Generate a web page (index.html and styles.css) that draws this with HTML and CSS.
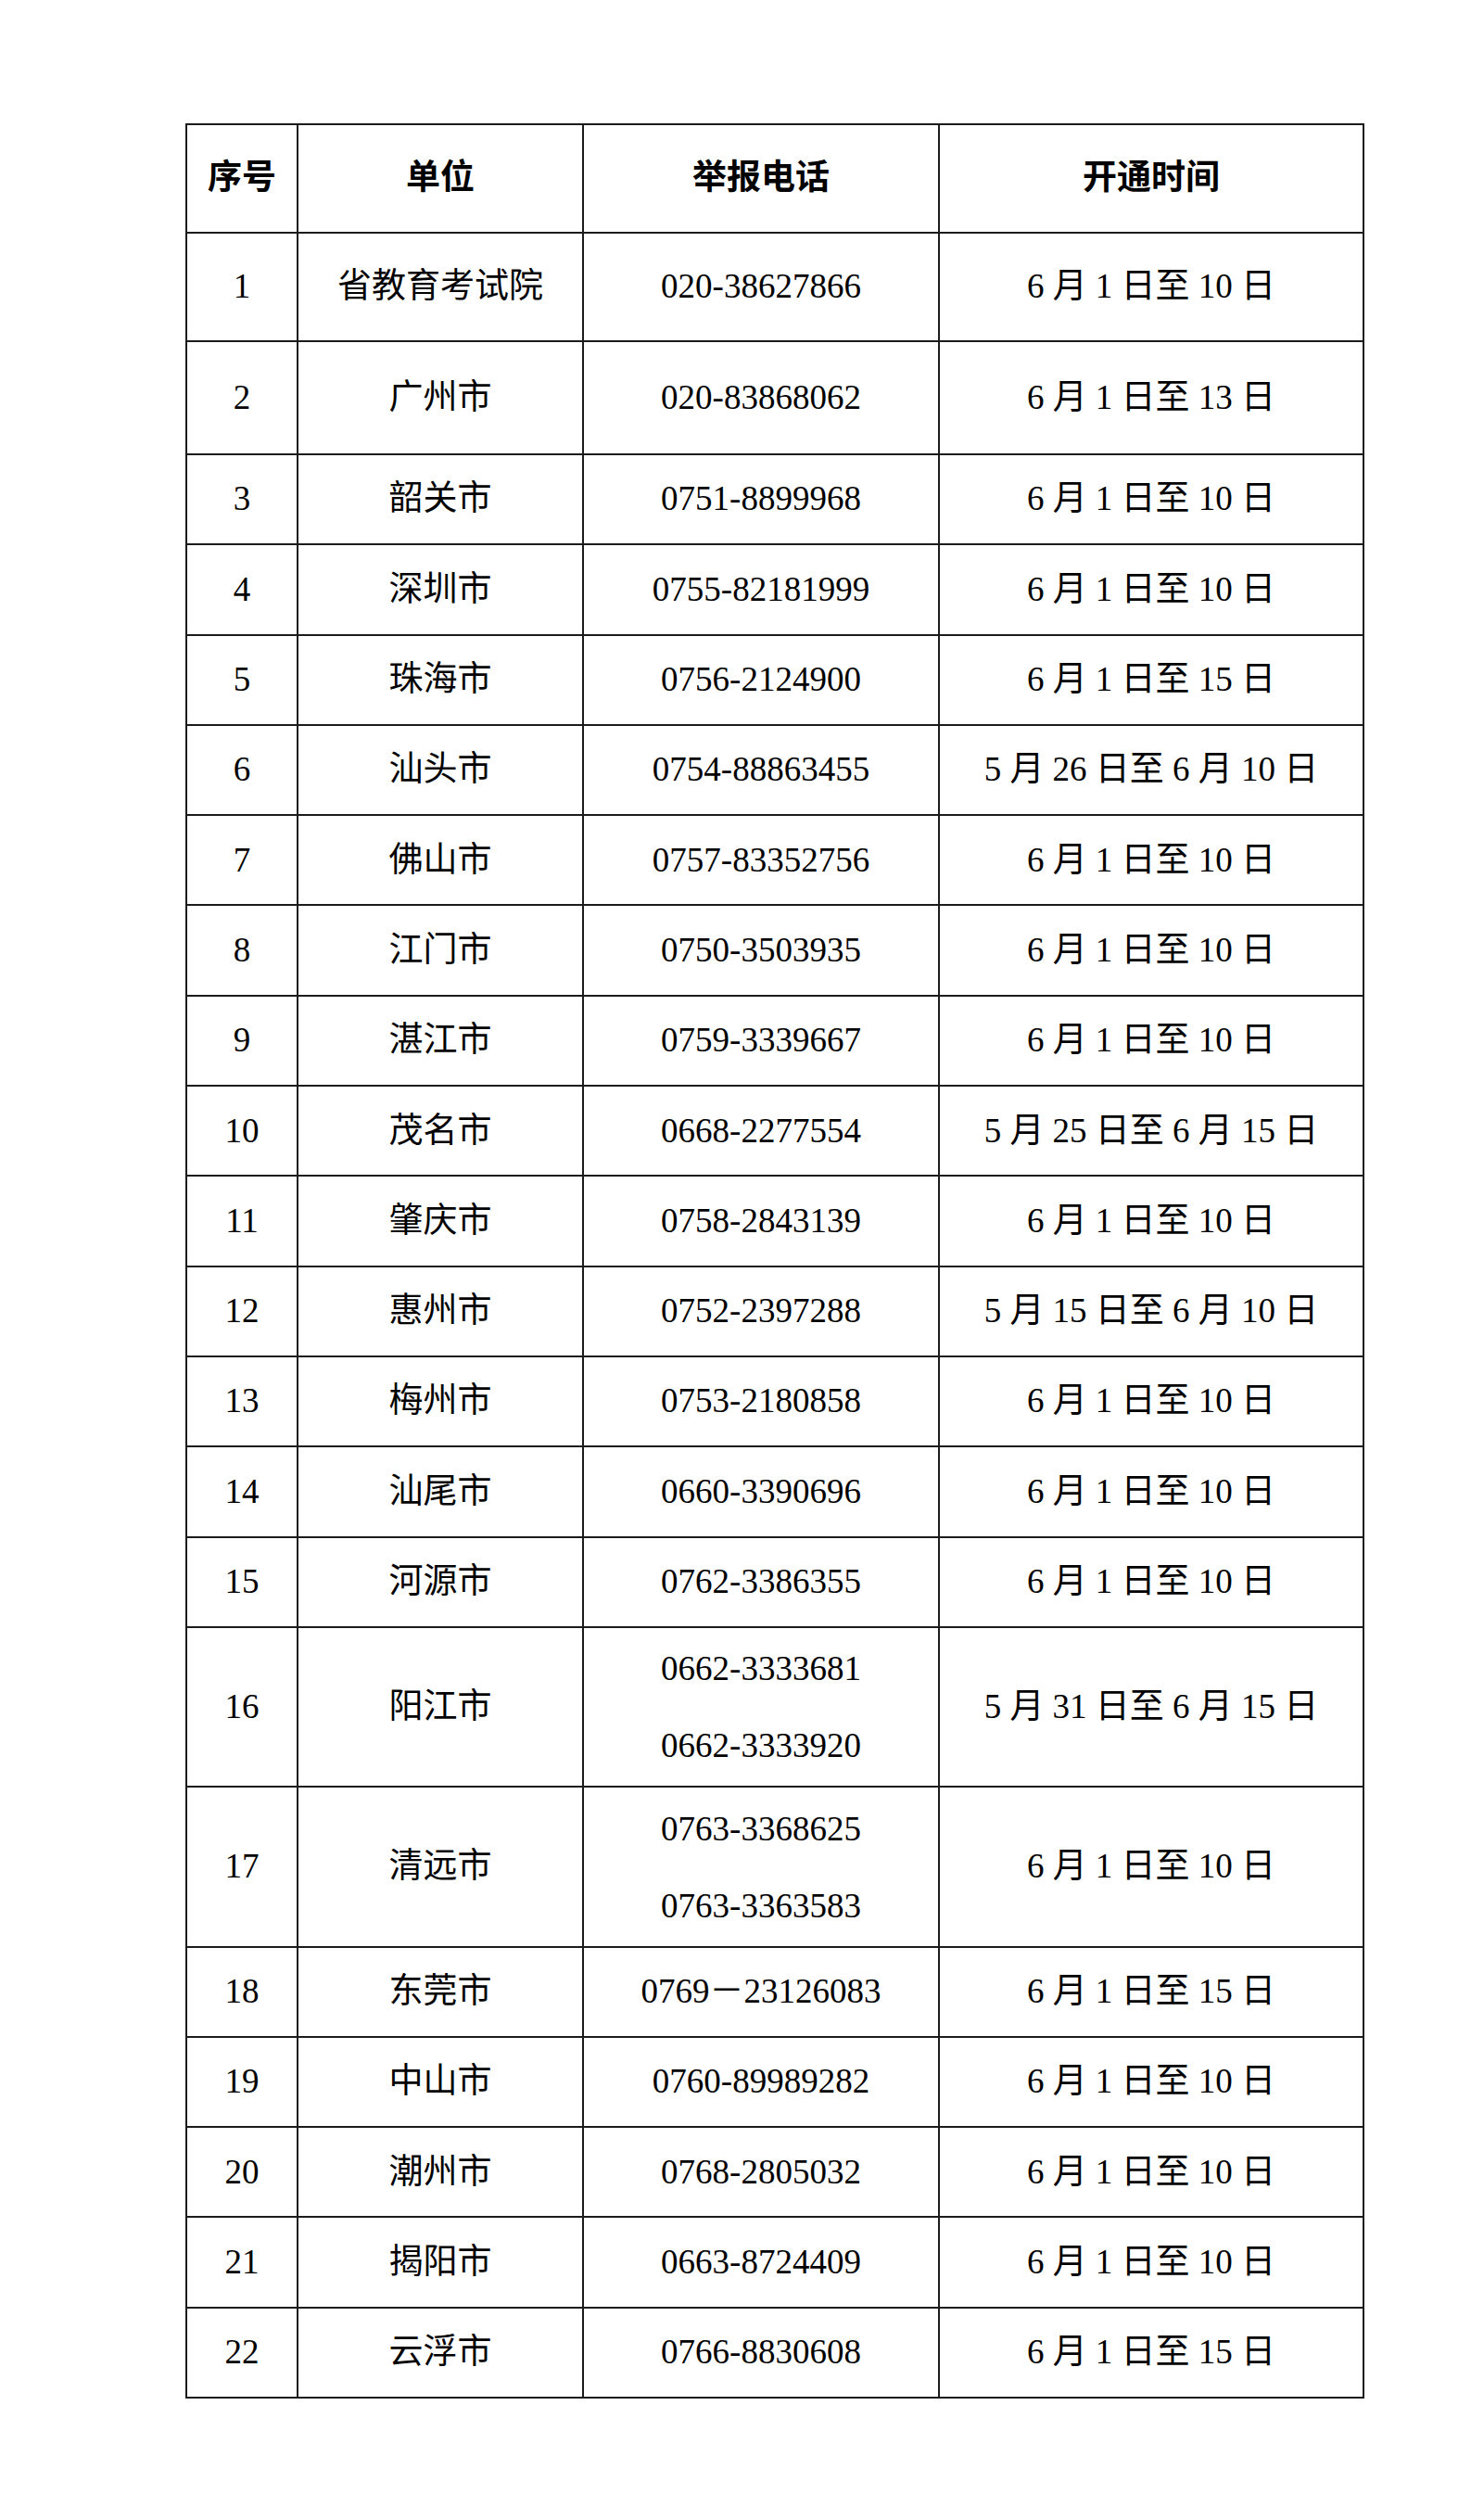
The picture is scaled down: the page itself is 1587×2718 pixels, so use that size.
FILE: index.html
```html
<!DOCTYPE html>
<html lang="zh-CN">
<head>
<meta charset="utf-8">
<title>举报电话</title>
<link rel="stylesheet" href="styles.css">
</head>
<body>
<table class="tbl">
  <colgroup>
    <col class="c-no">
    <col class="c-unit">
    <col class="c-tel">
    <col class="c-time">
  </colgroup>
  <thead>
    <tr class="r-head"><th>序号</th><th>单位</th><th>举报电话</th><th>开通时间</th></tr>
  </thead>
  <tbody>
    <tr class="r-tall"><td>1</td><td>省教育考试院</td><td>020-38627866</td><td>6 月 1 日至 10 日</td></tr>
    <tr class="r-tall2"><td>2</td><td>广州市</td><td>020-83868062</td><td>6 月 1 日至 13 日</td></tr>
    <tr class="r-std"><td>3</td><td>韶关市</td><td>0751-8899968</td><td>6 月 1 日至 10 日</td></tr>
    <tr class="r-std"><td>4</td><td>深圳市</td><td>0755-82181999</td><td>6 月 1 日至 10 日</td></tr>
    <tr class="r-std"><td>5</td><td>珠海市</td><td>0756-2124900</td><td>6 月 1 日至 15 日</td></tr>
    <tr class="r-std"><td>6</td><td>汕头市</td><td>0754-88863455</td><td>5 月 26 日至 6 月 10 日</td></tr>
    <tr class="r-std"><td>7</td><td>佛山市</td><td>0757-83352756</td><td>6 月 1 日至 10 日</td></tr>
    <tr class="r-std"><td>8</td><td>江门市</td><td>0750-3503935</td><td>6 月 1 日至 10 日</td></tr>
    <tr class="r-std"><td>9</td><td>湛江市</td><td>0759-3339667</td><td>6 月 1 日至 10 日</td></tr>
    <tr class="r-std"><td>10</td><td>茂名市</td><td>0668-2277554</td><td>5 月 25 日至 6 月 15 日</td></tr>
    <tr class="r-std"><td>11</td><td>肇庆市</td><td>0758-2843139</td><td>6 月 1 日至 10 日</td></tr>
    <tr class="r-std"><td>12</td><td>惠州市</td><td>0752-2397288</td><td>5 月 15 日至 6 月 10 日</td></tr>
    <tr class="r-std"><td>13</td><td>梅州市</td><td>0753-2180858</td><td>6 月 1 日至 10 日</td></tr>
    <tr class="r-std"><td>14</td><td>汕尾市</td><td>0660-3390696</td><td>6 月 1 日至 10 日</td></tr>
    <tr class="r-std"><td>15</td><td>河源市</td><td>0762-3386355</td><td>6 月 1 日至 10 日</td></tr>
    <tr class="r-double"><td>16</td><td>阳江市</td><td><div class="tel-line">0662-3333681</div><div class="tel-line">0662-3333920</div></td><td>5 月 31 日至 6 月 15 日</td></tr>
    <tr class="r-double"><td>17</td><td>清远市</td><td><div class="tel-line">0763-3368625</div><div class="tel-line">0763-3363583</div></td><td>6 月 1 日至 10 日</td></tr>
    <tr class="r-std2"><td>18</td><td>东莞市</td><td>0769－23126083</td><td>6 月 1 日至 15 日</td></tr>
    <tr class="r-std2"><td>19</td><td>中山市</td><td>0760-89989282</td><td>6 月 1 日至 10 日</td></tr>
    <tr class="r-std2"><td>20</td><td>潮州市</td><td>0768-2805032</td><td>6 月 1 日至 10 日</td></tr>
    <tr class="r-std2"><td>21</td><td>揭阳市</td><td>0663-8724409</td><td>6 月 1 日至 10 日</td></tr>
    <tr class="r-std2"><td>22</td><td>云浮市</td><td>0766-8830608</td><td>6 月 1 日至 15 日</td></tr>
  </tbody>
</table>
</body>
</html>
```

FILE: styles.css
```css
html, body {
  margin: 0;
  padding: 0;
  background: #ffffff;
}

body {
  font-family: "Liberation Serif", "Noto Sans CJK SC", serif;
  font-size: 37px;
  color: #000000;
}

.tbl {
  margin: 133px 0 0 200px;
  border-collapse: collapse;
  table-layout: fixed;
  width: 1270px;
  border: 2px solid #1c1c1c;
}

.c-no { width: 120px; }
.c-unit { width: 308px; }
.c-tel { width: 384px; }
.c-time { width: 458px; }

.tbl th,
.tbl td {
  border: 2px solid #1c1c1c;
  padding: 0;
  text-align: center;
  vertical-align: middle;
  line-height: 1.2;
  white-space: nowrap;
}

.tbl th {
  font-weight: 700;
}

.r-head { height: 117px; }
.r-tall { height: 117px; }
.r-tall2 { height: 122px; }
.r-std { height: 97.3px; }
.r-double { height: 172.5px; }
.r-std2 { height: 97.2px; }

.tel-line {
  line-height: 83px;
}
```
